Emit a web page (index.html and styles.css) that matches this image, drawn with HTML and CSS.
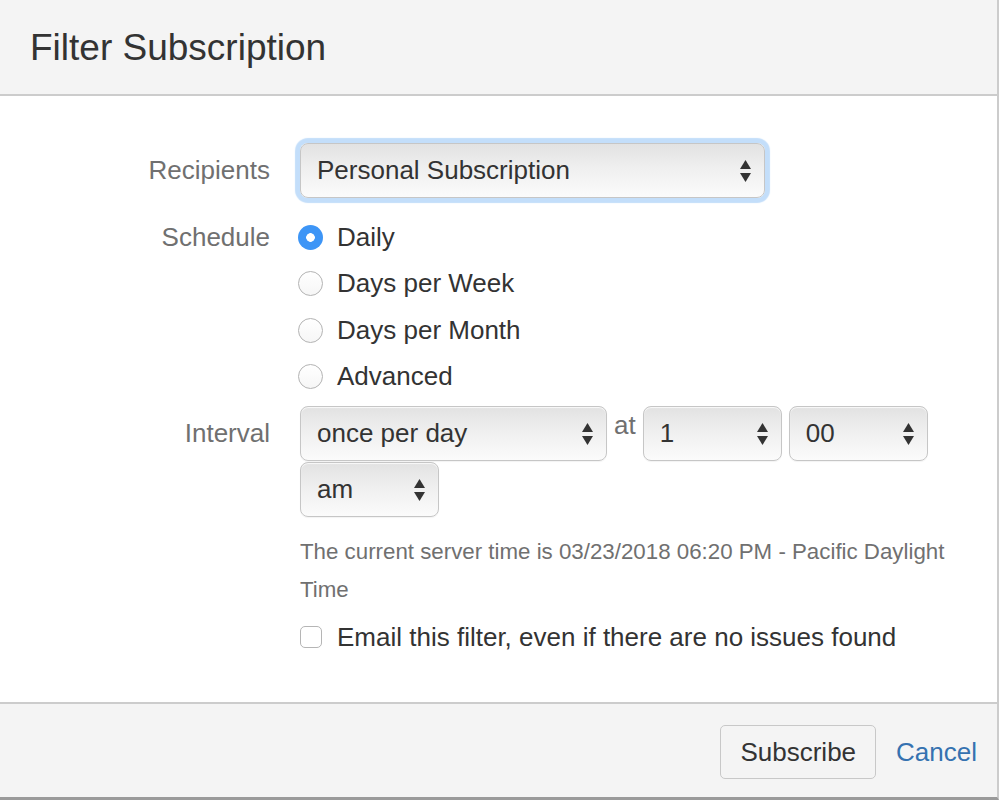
FILE: index.html
```html
<!DOCTYPE html>
<html lang="en">
<head>
<meta charset="utf-8">
<title>Filter Subscription</title>
<link rel="stylesheet" href="styles.css">
</head>
<body>
<div class="dialog">
  <header class="dialog-header">
    <h2 class="dialog-title">Filter Subscription</h2>
  </header>
  <div class="dialog-body">
    <div class="form-row row-recipients">
      <div class="field-label label-select">Recipients</div>
      <div class="field">
        <div class="select select-wide select-focus">
          <span class="select-value">Personal Subscription</span>
          <svg class="select-arrows" width="11" height="22" viewBox="0 0 11 22"><polygon points="0,9 5.5,0 11,9"/><polygon points="0,13 11,13 5.5,22"/></svg>
        </div>
      </div>
    </div>
    <div class="form-row row-schedule">
      <div class="field-label label-radio">Schedule</div>
      <div class="radio-list">
        <div class="radio-item"><span class="radio radio-checked"></span><span class="option-text">Daily</span></div>
        <div class="radio-item"><span class="radio"></span><span class="option-text">Days per Week</span></div>
        <div class="radio-item"><span class="radio"></span><span class="option-text">Days per Month</span></div>
        <div class="radio-item"><span class="radio"></span><span class="option-text">Advanced</span></div>
      </div>
    </div>
    <div class="form-row row-interval">
      <div class="field-label label-select">Interval</div>
      <div class="field">
        <div class="select-group">
          <div class="select select-interval">
            <span class="select-value">once per day</span>
            <svg class="select-arrows" width="11" height="22" viewBox="0 0 11 22"><polygon points="0,9 5.5,0 11,9"/><polygon points="0,13 11,13 5.5,22"/></svg>
          </div>
          <span class="at">at</span>
          <div class="select select-small">
            <span class="select-value">1</span>
            <svg class="select-arrows" width="11" height="22" viewBox="0 0 11 22"><polygon points="0,9 5.5,0 11,9"/><polygon points="0,13 11,13 5.5,22"/></svg>
          </div>
          <div class="select select-small">
            <span class="select-value">00</span>
            <svg class="select-arrows" width="11" height="22" viewBox="0 0 11 22"><polygon points="0,9 5.5,0 11,9"/><polygon points="0,13 11,13 5.5,22"/></svg>
          </div>
          <div class="select select-small">
            <span class="select-value">am</span>
            <svg class="select-arrows" width="11" height="22" viewBox="0 0 11 22"><polygon points="0,9 5.5,0 11,9"/><polygon points="0,13 11,13 5.5,22"/></svg>
          </div>
        </div>
        <p class="server-time">The current server time is 03/23/2018 06:20 PM - Pacific Daylight Time</p>
        <div class="checkbox-item"><span class="checkbox"></span><span class="option-text">Email this filter, even if there are no issues found</span></div>
      </div>
    </div>
  </div>
  <footer class="dialog-footer">
    <button class="btn" type="button">Subscribe</button>
    <a class="cancel" href="#">Cancel</a>
  </footer>
</div>
</body>
</html>
```
FILE: styles.css
```css
* { box-sizing: border-box; }

html, body {
  margin: 0;
  padding: 0;
  background: #ffffff;
}

body {
  font-family: "Liberation Sans", Arial, Helvetica, sans-serif;
  color: #333333;
}

.dialog {
  width: 999px;
  height: 800px;
  border-right: 2px solid #cccccc;
  border-bottom: 3px solid #9a9a9a;
  display: flex;
  flex-direction: column;
  background: #ffffff;
}

.dialog-header {
  height: 96px;
  background: #f4f4f4;
  border-bottom: 2px solid #cccccc;
  padding: 27px 30px 0;
}

.dialog-title {
  margin: 0;
  font-size: 37px;
  font-weight: normal;
  line-height: 42px;
  color: #333333;
}

.dialog-body {
  height: 606px;
  padding: 47px 32px 0 0;
}

.form-row {
  display: grid;
  grid-template-columns: 270px 1fr;
  column-gap: 30px;
  align-items: start;
}

.row-schedule { margin-top: 16px; }
.row-interval { margin-top: 6px; }

.field-label {
  text-align: right;
  font-size: 26px;
  color: #707070;
}

.label-select { line-height: 55px; }
.label-radio { line-height: 46.5px; }

.select {
  height: 55px;
  display: flex;
  align-items: center;
  justify-content: space-between;
  padding: 0 13px 0 16px;
  border: 1px solid #c6c6c6;
  border-radius: 8px;
  background: linear-gradient(to bottom, #e2e2e2 0%, #efefef 45%, #fbfbfb 100%);
  box-shadow: inset 0 1px 1px rgba(255,255,255,0.8), 0 1px 1px rgba(0,0,0,0.05);
  font-size: 26px;
  color: #333333;
}

.select-arrows { fill: #333333; flex: none; }

.select-wide { width: 465px; }
.select-focus { box-shadow: 0 0 1px 5px #c3defa; }
.select-interval { width: 307px; }
.select-small { width: 139px; }

.select-group {
  display: flex;
  flex-wrap: wrap;
  align-items: flex-start;
  gap: 1px 7px;
}

.at {
  font-size: 26px;
  line-height: 38px;
  color: #707070;
}

.radio-list {
  display: flex;
  flex-direction: column;
  margin-left: -2px;
}

.radio-item {
  height: 46.5px;
  display: flex;
  align-items: center;
  gap: 14px;
}

.option-text {
  font-size: 26px;
  color: #333333;
}

.radio {
  width: 25px;
  height: 25px;
  border-radius: 50%;
  border: 1.5px solid #b3b3b3;
  background: linear-gradient(to bottom, #ffffff, #f6f6f6);
  flex: none;
}

.radio-checked {
  border: none;
  background: radial-gradient(circle, #ffffff 0 4px, #3d95f6 4.6px);
}

.server-time {
  margin: 16px 0 0;
  font-size: 22.3px;
  line-height: 38px;
  color: #707070;
}

.checkbox-item {
  margin-top: 9px;
  height: 38px;
  display: flex;
  align-items: center;
  gap: 15px;
}

.checkbox {
  width: 22px;
  height: 22px;
  border: 1.5px solid #b5b5b5;
  border-radius: 5px;
  background: #ffffff;
  flex: none;
}

.dialog-footer {
  flex: 1;
  background: #f4f4f4;
  border-top: 2px solid #cccccc;
  padding: 21px 20px 0;
  display: flex;
  justify-content: flex-end;
  align-items: flex-start;
  gap: 20px;
}

.btn {
  height: 54px;
  padding: 0 19px;
  border: 1px solid #c8c8c8;
  border-radius: 5px;
  background: #f4f4f4;
  font-family: inherit;
  font-size: 26px;
  color: #333333;
}

.cancel {
  line-height: 54px;
  font-size: 26px;
  color: #3572b0;
  text-decoration: none;
}
```
